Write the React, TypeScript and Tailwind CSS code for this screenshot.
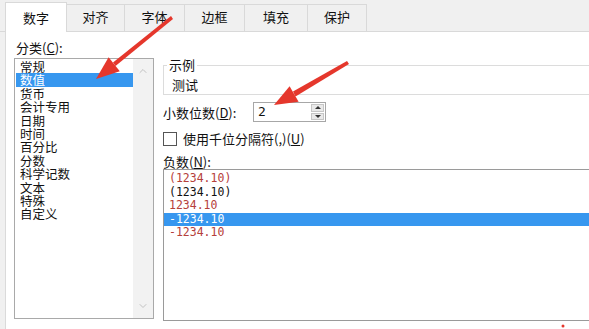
import { ChevronUp, ChevronDown } from 'lucide-react';

const tabs = [
  { label: '数字', w: 'w-[62px]', active: true },
  { label: '对齐', w: 'w-[58px]' },
  { label: '字体', w: 'w-[60px]' },
  { label: '边框', w: 'w-[60px]' },
  { label: '填充', w: 'w-[63px]' },
  { label: '保护', w: 'w-[59px]' },
];

const categories = ['常规', '数值', '货币', '会计专用', '日期', '时间', '百分比', '分数', '科学记数', '文本', '特殊', '自定义'];

const negatives = [
  { text: '(1234.10)', color: 'text-[#b5403a]' },
  { text: '(1234.10)', color: 'text-[#111]' },
  { text: '1234.10', color: 'text-[#b5403a]' },
  { text: '-1234.10', color: 'text-white', selected: true },
  { text: '-1234.10', color: 'text-[#b5403a]' },
];

function Arrows() {
  // the two red annotation arrows drawn over the dialog
  return (
    <svg className="absolute inset-0 pointer-events-none" width="589" height="329" viewBox="0 0 589 329">
      <polygon points="171,16 173,19 115.5,66 113,62.5" fill="#e5372c" />
      <polygon points="96,79 108.6,57.2 119.8,71.3" fill="#e5372c" />
      <polygon points="347,61 349,64 295.5,96.5 293,91.5" fill="#e5372c" />
      <polygon points="274,105 289.6,86.2 298.6,101.8" fill="#e5372c" />
      <circle cx="563" cy="326" r="1.5" fill="#e5372c" />
    </svg>
  );
}

export default function App() {
  return (
    <div
      className="relative w-[589px] h-[329px] overflow-hidden bg-[#f0f0f0] flex flex-col text-[#111]"
      style={{ fontFamily: "'Noto Sans CJK SC', 'Liberation Sans', sans-serif" }}
    >
      {/* tab strip */}
      <div className="h-[32px] flex items-end pl-[5px] border-b border-[#d9d9d9] shrink-0">
        {tabs.map((t) =>
          t.active ? (
            <div key={t.label} className={`${t.w} h-[30px] -mb-px bg-white border border-b-0 border-[#d9d9d9] flex items-center justify-center text-[13px] pt-[1px]`}>
              {t.label}
            </div>
          ) : (
            <div key={t.label} className={`${t.w} h-[27px] border-t border-r border-[#d9d9d9] flex items-center justify-center text-[13px] pb-[2px]`}>
              {t.label}
            </div>
          )
        )}
      </div>

      {/* page */}
      <div className="flex-1 ml-[5px] bg-white border-l border-[#dadada] flex pl-[8px] pt-[7px]">
        {/* left column */}
        <div className="w-[140px] flex flex-col">
          <div className="h-[19px] text-[13px] leading-[17px] pl-[2px]">
            分类(<u>C</u>):
          </div>
          <div className="h-[261px] border border-[#a9a9a9] flex">
            <div className="flex-1 pt-[1px] pl-[1px]">
              {categories.map((c, i) => (
                <div
                  key={c}
                  className={`h-[13.4px] text-[12.5px] leading-[13.4px] pl-[4px] whitespace-nowrap ${
                    i === 1 ? 'bg-[#3797ef] text-white' : ''
                  }`}
                >
                  {c}
                </div>
              ))}
            </div>
            <div className="w-[20px] bg-[#f2f2f2] flex flex-col items-center justify-between py-[6px]">
              <ChevronUp size={12} strokeWidth={2} className="text-[#c2c2c2]" />
              <ChevronDown size={12} strokeWidth={2} className="text-[#c2c2c2]" />
            </div>
          </div>
        </div>

        {/* right column */}
        <div className="flex-1 ml-[9px] flex flex-col">
          <div className="relative mt-[26px] h-[30px] border border-r-0 border-[#dcdcdc] pl-[8px] pt-[12px]">
            <span className="absolute left-[3px] -top-[8px] bg-white px-[2px] text-[13px] leading-[14px]">示例</span>
            <div className="text-[13px] leading-[14px]">测试</div>
          </div>

          <div className="mt-[7px] flex items-center h-[20px]">
            <span className="w-[90px] text-[13px] leading-[14px] pt-[1px]">
              小数位数(<u>D</u>):
            </span>
            <div className="w-[73px] h-[20px] border border-[#a7a7a7] flex">
              <div className="flex-1 text-[13px] leading-[18px] pl-[4px]" style={{ fontFamily: "'DejaVu Sans Mono', monospace" }}>
                2
              </div>
              <div className="w-[15px] flex flex-col gap-px p-px">
                <div className="flex-1 bg-[#e9e9e9] border border-[#c6c6c6] flex items-center justify-center">
                  <span className="w-0 h-0 border-l-[3px] border-r-[3px] border-b-[3px] border-l-transparent border-r-transparent border-b-[#333]" />
                </div>
                <div className="flex-1 bg-[#e9e9e9] border border-[#c6c6c6] flex items-center justify-center">
                  <span className="w-0 h-0 border-l-[3px] border-r-[3px] border-t-[3px] border-l-transparent border-r-transparent border-t-[#333]" />
                </div>
              </div>
            </div>
          </div>

          <div className="mt-[10px] flex items-center h-[14px]">
            <span className="w-[14px] h-[14px] border border-[#555] bg-white" />
            <span className="ml-[6px] text-[13px] leading-[14px] whitespace-nowrap">
              使用千位分隔符(,)(<u>U</u>)
            </span>
          </div>

          <div className="mt-[8px] h-[15px] text-[13px] leading-[14px] pt-[1px]">
            负数(<u>N</u>):
          </div>

          <div className="h-[152px] border border-r-0 border-[#9a9a9a] pt-[2px]" style={{ fontFamily: "'DejaVu Sans Mono', monospace" }}>
            {negatives.map((n, i) => (
              <div
                key={i}
                className={`h-[13.6px] text-[11.5px] leading-[13.6px] pl-[5px] ${n.color} ${n.selected ? 'bg-[#3797ef]' : ''}`}
              >
                {n.text}
              </div>
            ))}
          </div>
        </div>
      </div>

      <Arrows />
    </div>
  );
}
